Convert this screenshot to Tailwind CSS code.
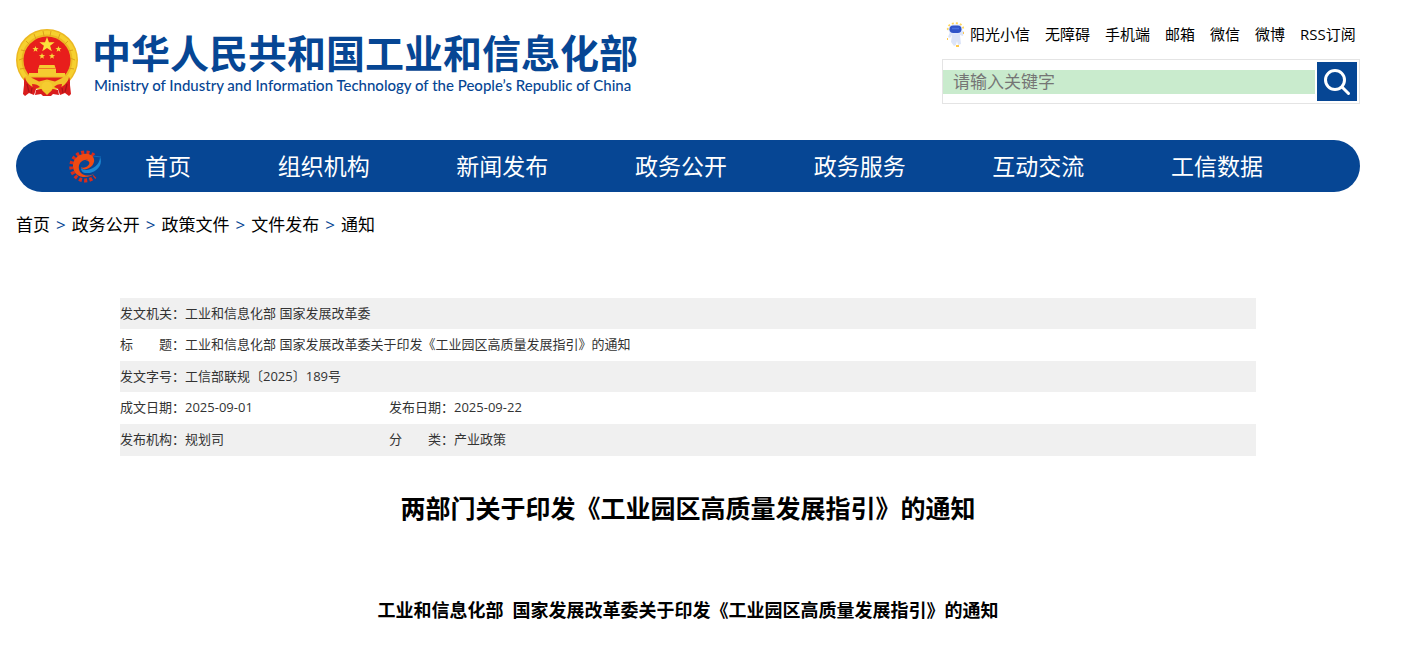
<!DOCTYPE html>
<html lang="zh-CN">
<head>
<meta charset="utf-8">
<meta name="viewport" content="width=device-width, initial-scale=1">
<title>两部门关于印发《工业园区高质量发展指引》的通知</title>
<script src="https://cdn.jsdelivr.net/npm/@tailwindcss/browser@4"></script>
</head>
<body class="bg-white pl-4 pr-[66px] text-black font-['Open_Sans','Noto_Sans_CJK_SC',sans-serif]">

<header class="flex items-start justify-between h-[140px]">
  <a href="#" class="flex items-start gap-[14px] pt-[29px] text-[#064694]">
    <svg class="w-[62px] h-[68px] shrink-0" viewBox="0 0 62 68" aria-hidden="true">
      <circle cx="31" cy="31" r="31" fill="#ecb822"/>
      <circle cx="31" cy="31" r="27.500" fill="none" stroke="#f6d02f" stroke-width="4"/>
      <path d="M3 31l5-2M5 21l5 1M10 12l4 4M18 5l2 5M27 2l1 5M35 2l-1 5M44 5l-2 5M52 12l-4 4M57 21l-5 1M59 31l-5-2M4 40l6-1M58 40l-6-1" stroke="#dda01c" stroke-width="1"/>
      <circle cx="31" cy="31" r="23.500" fill="#e81e1c"/>
      <path d="M31 8l2 5.300h5.600l-4.500 3.500 1.700 5.400L31 19l-4.800 3.200 1.700-5.400-4.500-3.500H29z" fill="#fbe13c"/>
      <g fill="#f7d83a">
        <path id="star" d="M19.500 17l.8 2.100 2.300.1-1.800 1.400.6 2.200-1.900-1.200-1.900 1.200.6-2.200-1.800-1.400 2.300-.1z"/>
        <use href="#star" x="23"/><use href="#star" x="6.500" y="7"/><use href="#star" x="16.500" y="7"/>
      </g>
      <path d="M23.500 36h15l1 3h-17zM22 39.500h18V44h9v4H13v-4h9z" fill="#f5cc30"/>
      <path d="M9 47h44l-4 13H13z" fill="#f1c32a"/>
      <path d="M15 48.500h32l-8 4-8-2-8 2z" fill="#e2231b"/>
      <path d="M16 55c4 0 6 1 8 3l-7 3zM46 55c-4 0-6 1-8 3l7 3z" fill="#e2231b"/>
      <path d="M9 48c1 7 8 10 11 12l-2 6-5-2-4 3-2-2 1-9c0-4 0-6 1-8zM53 48c-1 7-8 10-11 12l2 6 5-2 4 3 2-2-1-9c0-4 0-6-1-8z" fill="#d91c1c"/>
      <path d="M11 55l2 8M51 55l-2 8M16 59l-1 5M46 59l1 5" stroke="#a81518" stroke-width="1.200"/>
      <path d="M20 61l5-1 6 3 6-3 5 1 1 5-6-1-2 2h-8l-2-2-6 1z" fill="#d91c1c"/>
      <circle cx="31" cy="58" r="5.500" fill="#f5cc30"/>
      <path d="M26 61l5 5 5-5z" fill="#f1c32a"/>
    </svg>
    <span class="flex flex-col whitespace-nowrap pt-0.5">
      <span class="text-[39px] leading-[44px] font-bold">中华人民共和国工业和信息化部</span>
      <span lang="en" class="text-[15px] leading-5 font-medium pl-0.5 font-['Lato',sans-serif]">Ministry of Industry and Information Technology of the People’s Republic of China</span>
    </span>
  </a>

  <div class="w-[418px]">
    <nav aria-label="快捷链接" class="flex items-center h-[59px] pt-2 pl-1 gap-[15px] text-[15px] leading-5 whitespace-nowrap">
      <a href="#" class="flex items-center gap-[5px]">
        <svg class="w-[19px] h-[28px]" viewBox="0 0 19 28" aria-hidden="true">
          <path d="M2 10C0 1 19 1 17 10" fill="none" stroke="#ffd65c" stroke-width="2" stroke-dasharray="2 2"/>
          <path d="M4 12l-2 5 2 1 2-3-1 7 3 4 2-1 1-4 1 4 3-1-1-9 3 1 1-5z" fill="#dce4f8"/>
          <rect x="2.500" y="4.500" width="14" height="10" rx="5" fill="#dfe7fb"/>
          <rect x="3.500" y="5.500" width="12" height="7.500" rx="3.700" fill="#3154c8"/>
          <path d="M6 8.500h7" stroke="#4a70e0" stroke-width="1.500"/>
          <path d="M10 26h3M1 19h1M17 13h1" stroke="#ffc94a" stroke-width="2"/>
        </svg>
        <span>阳光小信</span>
      </a>
      <a href="#">无障碍</a>
      <a href="#">手机端</a>
      <a href="#">邮箱</a>
      <a href="#">微信</a>
      <a href="#">微博</a>
      <a href="#">RSS订阅</a>
    </nav>
    <form class="flex items-center justify-between h-[45px] border border-[#e4e4e4] pr-px" onsubmit="return false">
      <input type="text" aria-label="搜索" placeholder="请输入关键字" class="flex-1 min-w-0 h-6 mr-0.5 pl-[10px] bg-[#c9ebcd] text-[17px] leading-6 placeholder:text-[#757575] outline-none">
      <button type="submit" aria-label="搜索" class="flex items-center justify-center w-10 h-[39px] mr-px bg-[#064694]">
        <svg class="w-7 h-7" viewBox="0 0 28 28" fill="none" stroke="#fff" stroke-width="3" stroke-linecap="round" aria-hidden="true"><circle cx="12" cy="12" r="9.500"/><path d="M19 19l6.500 6.500"/></svg>
      </button>
    </form>
  </div>
</header>

<nav aria-label="主导航" class="flex items-center h-[52px] rounded-full bg-[#064694] pl-[51px] pr-[97px] text-[23px] leading-8 text-white whitespace-nowrap">
  <svg class="w-[36px] h-[34px] shrink-0 mr-[42px]" viewBox="0 0 36 34" fill="none" aria-hidden="true">
    <path d="M27 6.500A14 14 0 1 0 28 27.500" stroke="#d92c1c" stroke-width="4" stroke-dasharray="3 2.200"/>
    <path d="M28 24C21 31 7 29 6 18 5 8 16 2 24 6c5 3 4 10-2 13-3 2-7 2-8-1 0-3 3-6 7-7-6-1-10 4-9 9 1 6 9 9 16 4z" fill="#f04a12"/>
    <path d="M14 18c-1-3 3-7 7-6 2 1 2 4-2 6-2 1-4 1-5 0z" fill="#064694"/>
    <path d="M14 19c4 5 19 0 19-11 4 9-6 17-14 16-3 0-5-2-5-5z" fill="#1b87d2"/>
    <path d="M26 7l8 1" stroke="#1268b4" stroke-width="1"/>
  </svg>
  <div class="flex flex-1 justify-between">
    <a href="#">首页</a>
    <a href="#">组织机构</a>
    <a href="#">新闻发布</a>
    <a href="#">政务公开</a>
    <a href="#">政务服务</a>
    <a href="#">互动交流</a>
    <a href="#">工信数据</a>
  </div>
</nav>

<nav aria-label="面包屑" class="flex items-center gap-[6px] pt-[21px] text-[17px] leading-6 whitespace-nowrap">
  <a href="#">首页</a><span class="text-[#064694]">&gt;</span>
  <a href="#">政务公开</a><span class="text-[#064694]">&gt;</span>
  <a href="#">政策文件</a><span class="text-[#064694]">&gt;</span>
  <a href="#">文件发布</a><span class="text-[#064694]">&gt;</span>
  <a href="#">通知</a>
</nav>

<main class="px-[104px] pt-[61px]">
  <table class="w-full table-fixed border-collapse text-left text-[13px] leading-5 text-[#333]">
    <colgroup><col class="w-[65px]"><col class="w-[204px]"><col class="w-[65px]"><col></colgroup>
    <tbody>
      <tr class="h-[31px] bg-[#f0f0f0]"><th scope="row" class="p-0 pb-0.5 font-normal whitespace-nowrap">发文机关：</th><td colspan="3" class="p-0 pb-0.5">工业和信息化部 国家发展改革委</td></tr>
      <tr class="h-8"><th scope="row" class="p-0 pb-0.5 font-normal whitespace-nowrap">标&emsp;&emsp;题：</th><td colspan="3" class="p-0 pb-0.5">工业和信息化部 国家发展改革委关于印发《工业园区高质量发展指引》的通知</td></tr>
      <tr class="h-[31px] bg-[#f0f0f0]"><th scope="row" class="p-0 pb-0.5 font-normal whitespace-nowrap">发文字号：</th><td colspan="3" class="p-0 pb-0.5">工信部联规〔2025〕189号</td></tr>
      <tr class="h-8"><th scope="row" class="p-0 pb-0.5 font-normal whitespace-nowrap">成文日期：</th><td class="p-0 pb-0.5">2025-09-01</td><th scope="row" class="p-0 pb-0.5 font-normal whitespace-nowrap">发布日期：</th><td class="p-0 pb-0.5">2025-09-22</td></tr>
      <tr class="h-8 bg-[#f0f0f0]"><th scope="row" class="p-0 pb-0.5 font-normal whitespace-nowrap">发布机构：</th><td class="p-0 pb-0.5">规划司</td><th scope="row" class="p-0 pb-0.5 font-normal whitespace-nowrap">分&emsp;&emsp;类：</th><td class="p-0 pb-0.5">产业政策</td></tr>
    </tbody>
  </table>

  <h1 class="pt-8 text-center text-[25px] leading-10 font-bold">两部门关于印发《工业园区高质量发展指引》的通知</h1>
  <p class="pt-[68px] text-center text-[18px] leading-7 font-bold">工业和信息化部&ensp;国家发展改革委关于印发《工业园区高质量发展指引》的通知</p>
</main>
</body>
</html>
